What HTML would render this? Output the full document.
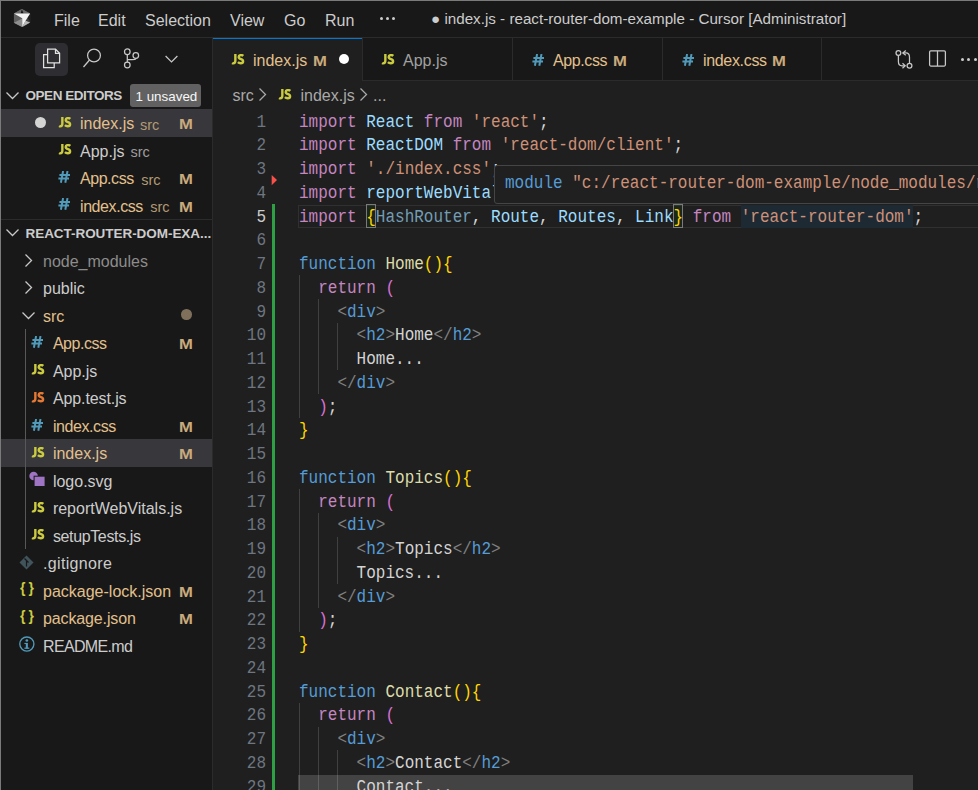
<!DOCTYPE html><html><head><meta charset="utf-8"><style>
*{box-sizing:border-box}
html,body{margin:0;padding:0}
body{width:978px;height:790px;overflow:hidden;background:#1f1f1f;position:relative;font-family:"Liberation Sans",sans-serif;color:#cccccc}
.a{position:absolute}
.t{position:absolute;white-space:nowrap;font-family:"Liberation Sans",sans-serif}
.menu{top:10px;font-size:16px;line-height:20px;color:#cccccc}
.st{font-size:16px;line-height:20px;color:#cccccc}
.desc{font-size:14.5px;line-height:20px}
.jsi{font-weight:700;color:#cbcb41;font-size:13px;line-height:14px;transform:scaleX(0.84);transform-origin:0 0}
.hash{font-weight:700;color:#519aba;font-size:15.5px;line-height:16px}
.mod{color:#e2c08d}
.gi{color:#8c8c8c}
.lnum{position:absolute;left:199px;width:67px;transform:scaleY(1.09);transform-origin:0 0;text-align:right;font-family:"Liberation Mono",monospace;font-size:16px;line-height:20px;color:#6e7681;white-space:pre}
.code{position:absolute;left:299px;transform:scaleY(1.09);transform-origin:0 0;font-family:"Liberation Mono",monospace;font-size:16px;line-height:20px;white-space:pre;color:#d4d4d4}
.hr{color:#739db4}.k{color:#c586c0}.b{color:#569cd6}.v{color:#9cdcfe}.s{color:#ce9178}.f{color:#dcdcaa}.p{color:#808080}.w{color:#d4d4d4}
.y{color:#ffd700}.m{color:#da70d6}.c{color:#179fff}
</style></head><body>
<div class="a" style="left:0px;top:0px;width:978px;height:790px;background:#1f1f1f;"></div>
<div class="a" style="left:1px;top:1px;width:977px;height:36px;background:#181818;"></div>
<div class="a" style="left:1px;top:37px;width:977px;height:1px;background:#2b2b2b;"></div>
<div class="a" style="left:0px;top:0px;width:978px;height:1px;background:#7a7a7a;"></div>
<div class="a" style="left:0px;top:0px;width:1px;height:790px;background:#7a7a7a;"></div>
<svg class="a" style="left:0px;top:0px" width="40" height="34" viewBox="0 0 40 34">
  <polygon points="21.85,8.95 30.1,13.4 30.1,22.6 22.2,27.05 13.95,22.8 13.95,13.4" fill="#5e5e5e"/>
  <polygon points="21.85,8.95 30.1,13.4 13.95,13.4" fill="#6a6a6a"/>
  <polygon points="21.85,9.5 20.6,13.4 23.6,13.4" fill="#151515"/>
  <polygon points="13.95,13.4 22.2,18.2 22.2,27.05 13.95,22.8" fill="#5f5f5f"/>
  <polygon points="13.95,22.8 22.2,18.6 22.2,27.05" fill="#8f8f8f"/>
  <polygon points="22.2,18.2 30.1,13.4 30.1,22.6 22.2,27.05" fill="#3a3a3a"/>
  <polygon points="22.2,27.05 30.1,22.6 25.6,20.8" fill="#b8b8b8"/>
  <polygon points="27.3,17.5 30.1,14.5 30.1,21.5" fill="#1e1e1e"/>
  <polygon points="13.95,13.4 30.1,13.4 25.6,20.8 22.2,27.05 22.2,18.2" fill="#f2f2f2"/>
</svg>
<div class="t menu" style="left:54px;top:11px;">File</div>
<div class="t menu" style="left:98px;top:11px;">Edit</div>
<div class="t menu" style="left:145px;top:11px;">Selection</div>
<div class="t menu" style="left:230px;top:11px;">View</div>
<div class="t menu" style="left:284px;top:11px;">Go</div>
<div class="t menu" style="left:325px;top:11px;">Run</div>
<div class="a" style="left:379.7px;top:16.5px;width:3px;height:3px;background:#cccccc;border-radius:50%"></div>
<div class="a" style="left:385.95px;top:16.5px;width:3px;height:3px;background:#cccccc;border-radius:50%"></div>
<div class="a" style="left:392.2px;top:16.5px;width:3px;height:3px;background:#cccccc;border-radius:50%"></div>
<div class="t menu" style="left:431px;top:8.7px;font-size:15.2px">● index.js - react-router-dom-example - Cursor [Administrator]</div>
<div class="a" style="left:1px;top:38px;width:211px;height:752px;background:#181818;"></div>
<div class="a" style="left:212px;top:38px;width:1px;height:752px;background:#2b2b2b;"></div>
<div class="a" style="left:35px;top:43px;width:33px;height:33px;background:#2e2e32;border-radius:5px"></div>
<svg class="a" style="left:40px;top:46px" width="24" height="26" viewBox="0 0 24 26" fill="none" stroke="#e0e0e0" stroke-width="1.25">
<path d="M7.6 8.6 H3.6 V21.5 H14.2 V16.9"/>
<path d="M7.6 3.2 H15.5 L19.6 7.3 V16.9 H7.6 Z"/>
<path d="M15.5 3.2 V7.3 H19.6"/>
</svg>
<svg class="a" style="left:80px;top:46px" width="24" height="24" viewBox="0 0 24 24" fill="none" stroke="#c8c8c8" stroke-width="1.25">
<circle cx="14" cy="9.5" r="6.4"/><path d="M9.5 14 L3.5 21"/>
</svg>
<svg class="a" style="left:118px;top:44px" width="24" height="26" viewBox="0 0 24 26" fill="none" stroke="#c8c8c8" stroke-width="1.25">
<circle cx="9.3" cy="7.7" r="2.8"/><circle cx="9.3" cy="21" r="2.8"/><circle cx="17.8" cy="11.5" r="2.8"/>
<path d="M9.3 10.5 V18.2"/><path d="M17.8 14.3 C17.8 16 16.5 15.6 9.3 15.6"/>
</svg>
<svg class="a" style="left:163px;top:52px" width="18" height="14" viewBox="0 0 18 14" fill="none" stroke="#c8c8c8" stroke-width="1.25">
<path d="M2.6 4 L8.5 9.9 L14.4 4"/>
</svg>
<svg class="a" style="left:5px;top:89.7px" width="16" height="12" viewBox="0 0 16 12" fill="none" stroke="#c8c8c8" stroke-width="1.3"><path d="M1.5 2.5 L7.5 8.5 L13.5 2.5"/></svg>
<div class="t st" style="left:25.5px;top:86px;font-weight:700;font-size:13.5px;letter-spacing:-0.45px;color:#cccccc">OPEN EDITORS</div>
<div class="a" style="left:130px;top:84px;width:70.5px;height:23px;background:#616161;border-radius:3px"></div>
<div class="t st" style="left:135.5px;top:86.5px;font-size:13.4px;color:#f8f8f8">1 unsaved</div>
<div class="a" style="left:1px;top:109px;width:211px;height:27.5px;background:#37373c;"></div>
<div class="a" style="left:34.5px;top:117.3px;width:11px;height:11px;background:#d4d4d4;border-radius:50%"></div>
<svg class="a" style="left:57.8px;top:116.5px" width="14" height="11" viewBox="0 0 14 11" fill="none" stroke="#cbcb41" stroke-width="2.4"><path d="M4.35 0 V6.8 C4.35 8.6 3.6 9.3 2.2 9.3 C1.8 9.3 1.4 9.2 1.1 9.0"/><path d="M12.3 1.9 C11.7 1.4 10.9 1.1 10 1.1 C8.6 1.1 7.7 1.9 7.7 3 C7.7 4.3 8.7 4.7 10 5.1 C11.4 5.5 12.1 6.2 12.1 7.3 C12.1 8.5 11.1 9.3 9.7 9.3 C8.6 9.3 7.6 8.9 6.9 8.2"/></svg>
<div class="t st" style="left:80px;top:114.0px;color:#e2c08d;letter-spacing:0px">index.js</div>
<div class="t st desc" style="left:139.9px;top:114.6px;color:#b39a74">src</div>
<div class="t st" style="left:178.7px;top:114.0px;color:#c8aa7c;font-size:14.6px;font-weight:700;transform:scaleX(1.14);transform-origin:0 0">M</div>
<svg class="a" style="left:57.8px;top:144.0px" width="14" height="11" viewBox="0 0 14 11" fill="none" stroke="#cbcb41" stroke-width="2.4"><path d="M4.35 0 V6.8 C4.35 8.6 3.6 9.3 2.2 9.3 C1.8 9.3 1.4 9.2 1.1 9.0"/><path d="M12.3 1.9 C11.7 1.4 10.9 1.1 10 1.1 C8.6 1.1 7.7 1.9 7.7 3 C7.7 4.3 8.7 4.7 10 5.1 C11.4 5.5 12.1 6.2 12.1 7.3 C12.1 8.5 11.1 9.3 9.7 9.3 C8.6 9.3 7.6 8.9 6.9 8.2"/></svg>
<div class="t st" style="left:80px;top:141.5px;color:#cccccc;letter-spacing:0px">App.js</div>
<div class="t st desc" style="left:130.5px;top:142.1px;color:#9d9d9d">src</div>
<svg class="a" style="left:58.4px;top:170.8px" width="13" height="12" viewBox="0 0 13 12" fill="none" stroke="#519aba" stroke-width="2"><path d="M5.1 0 L2.9 11.8 M9.5 0 L7.3 11.8 M1.4 4 H12 M0.4 7.6 H11"/></svg>
<div class="t st" style="left:80px;top:169.0px;color:#e2c08d;letter-spacing:-0.45px">App.css</div>
<div class="t st desc" style="left:141.2px;top:169.6px;color:#b39a74">src</div>
<div class="t st" style="left:178.7px;top:169.0px;color:#c8aa7c;font-size:14.6px;font-weight:700;transform:scaleX(1.14);transform-origin:0 0">M</div>
<svg class="a" style="left:58.4px;top:198.3px" width="13" height="12" viewBox="0 0 13 12" fill="none" stroke="#519aba" stroke-width="2"><path d="M5.1 0 L2.9 11.8 M9.5 0 L7.3 11.8 M1.4 4 H12 M0.4 7.6 H11"/></svg>
<div class="t st" style="left:80px;top:196.5px;color:#e2c08d;letter-spacing:-0.42px">index.css</div>
<div class="t st desc" style="left:150.2px;top:197.1px;color:#b39a74">src</div>
<div class="t st" style="left:178.7px;top:196.5px;color:#c8aa7c;font-size:14.6px;font-weight:700;transform:scaleX(1.14);transform-origin:0 0">M</div>
<div class="a" style="left:1px;top:219px;width:211px;height:1px;background:#2b2b2b;"></div>
<svg class="a" style="left:5px;top:227px" width="16" height="12" viewBox="0 0 16 12" fill="none" stroke="#c8c8c8" stroke-width="1.3"><path d="M1.5 2.5 L7.5 8.5 L13.5 2.5"/></svg>
<div class="t st" style="left:25.5px;top:223.5px;font-weight:700;font-size:13.5px;letter-spacing:-0.05px;color:#cccccc">REACT-ROUTER-DOM-EXA...</div>
<div class="a" style="left:1px;top:439.0px;width:211px;height:27.5px;background:#37373c;"></div>
<div class="a" style="left:25px;top:329.0px;width:1px;height:220.0px;background:#585858;"></div>
<svg class="a" style="left:22.5px;top:252.5px" width="12" height="16" viewBox="0 0 12 16" fill="none" stroke="#c8c8c8" stroke-width="1.3"><path d="M2.5 1.5 L8.5 7.5 L2.5 13.5"/></svg>
<div class="t st" style="left:43px;top:251.5px;color:#8c8c8c;letter-spacing:0px">node_modules</div>
<svg class="a" style="left:22.5px;top:280.0px" width="12" height="16" viewBox="0 0 12 16" fill="none" stroke="#c8c8c8" stroke-width="1.3"><path d="M2.5 1.5 L8.5 7.5 L2.5 13.5"/></svg>
<div class="t st" style="left:43px;top:279.0px;color:#cccccc;letter-spacing:0px">public</div>
<svg class="a" style="left:21px;top:309.5px" width="16" height="12" viewBox="0 0 16 12" fill="none" stroke="#c8c8c8" stroke-width="1.3"><path d="M1.5 2.5 L7.5 8.5 L13.5 2.5"/></svg>
<div class="t st" style="left:43px;top:306.5px;color:#e2c08d;letter-spacing:0px">src</div>
<div class="a" style="left:181px;top:309.1px;width:10.5px;height:10.5px;background:#7f705b;border-radius:50%"></div>
<svg class="a" style="left:31px;top:336.0px" width="13" height="12" viewBox="0 0 13 12" fill="none" stroke="#519aba" stroke-width="2"><path d="M5.1 0 L2.9 11.8 M9.5 0 L7.3 11.8 M1.4 4 H12 M0.4 7.6 H11"/></svg>
<div class="t st" style="left:52.9px;top:334.0px;color:#e2c08d;letter-spacing:-0.45px">App.css</div>
<div class="t st" style="left:178.7px;top:334.0px;color:#c8aa7c;font-size:14.6px;font-weight:700;transform:scaleX(1.14);transform-origin:0 0">M</div>
<svg class="a" style="left:31px;top:364.0px" width="14" height="11" viewBox="0 0 14 11" fill="none" stroke="#cbcb41" stroke-width="2.4"><path d="M4.35 0 V6.8 C4.35 8.6 3.6 9.3 2.2 9.3 C1.8 9.3 1.4 9.2 1.1 9.0"/><path d="M12.3 1.9 C11.7 1.4 10.9 1.1 10 1.1 C8.6 1.1 7.7 1.9 7.7 3 C7.7 4.3 8.7 4.7 10 5.1 C11.4 5.5 12.1 6.2 12.1 7.3 C12.1 8.5 11.1 9.3 9.7 9.3 C8.6 9.3 7.6 8.9 6.9 8.2"/></svg>
<div class="t st" style="left:52.9px;top:361.5px;color:#cccccc;letter-spacing:0px">App.js</div>
<svg class="a" style="left:31px;top:391.5px" width="14" height="11" viewBox="0 0 14 11" fill="none" stroke="#e37933" stroke-width="2.4"><path d="M4.35 0 V6.8 C4.35 8.6 3.6 9.3 2.2 9.3 C1.8 9.3 1.4 9.2 1.1 9.0"/><path d="M12.3 1.9 C11.7 1.4 10.9 1.1 10 1.1 C8.6 1.1 7.7 1.9 7.7 3 C7.7 4.3 8.7 4.7 10 5.1 C11.4 5.5 12.1 6.2 12.1 7.3 C12.1 8.5 11.1 9.3 9.7 9.3 C8.6 9.3 7.6 8.9 6.9 8.2"/></svg>
<div class="t st" style="left:52.9px;top:389.0px;color:#cccccc;letter-spacing:-0.1px">App.test.js</div>
<svg class="a" style="left:31px;top:418.5px" width="13" height="12" viewBox="0 0 13 12" fill="none" stroke="#519aba" stroke-width="2"><path d="M5.1 0 L2.9 11.8 M9.5 0 L7.3 11.8 M1.4 4 H12 M0.4 7.6 H11"/></svg>
<div class="t st" style="left:52.9px;top:416.5px;color:#e2c08d;letter-spacing:-0.42px">index.css</div>
<div class="t st" style="left:178.7px;top:416.5px;color:#c8aa7c;font-size:14.6px;font-weight:700;transform:scaleX(1.14);transform-origin:0 0">M</div>
<svg class="a" style="left:31px;top:446.5px" width="14" height="11" viewBox="0 0 14 11" fill="none" stroke="#cbcb41" stroke-width="2.4"><path d="M4.35 0 V6.8 C4.35 8.6 3.6 9.3 2.2 9.3 C1.8 9.3 1.4 9.2 1.1 9.0"/><path d="M12.3 1.9 C11.7 1.4 10.9 1.1 10 1.1 C8.6 1.1 7.7 1.9 7.7 3 C7.7 4.3 8.7 4.7 10 5.1 C11.4 5.5 12.1 6.2 12.1 7.3 C12.1 8.5 11.1 9.3 9.7 9.3 C8.6 9.3 7.6 8.9 6.9 8.2"/></svg>
<div class="t st" style="left:52.9px;top:444.0px;color:#e2c08d;letter-spacing:0px">index.js</div>
<div class="t st" style="left:178.7px;top:444.0px;color:#c8aa7c;font-size:14.6px;font-weight:700;transform:scaleX(1.14);transform-origin:0 0">M</div>
<svg class="a" style="left:28px;top:470.5px" width="18" height="18" viewBox="0 0 18 18">
<circle cx="5.6" cy="5" r="4.3" fill="#a074c4"/><rect x="5.6" y="4.7" width="11" height="10.3" fill="#181818"/><rect x="6.6" y="5.7" width="10" height="9.3" fill="#a074c4"/></svg>
<div class="t st" style="left:52.9px;top:471.5px;color:#cccccc;letter-spacing:0px">logo.svg</div>
<svg class="a" style="left:31px;top:501.5px" width="14" height="11" viewBox="0 0 14 11" fill="none" stroke="#cbcb41" stroke-width="2.4"><path d="M4.35 0 V6.8 C4.35 8.6 3.6 9.3 2.2 9.3 C1.8 9.3 1.4 9.2 1.1 9.0"/><path d="M12.3 1.9 C11.7 1.4 10.9 1.1 10 1.1 C8.6 1.1 7.7 1.9 7.7 3 C7.7 4.3 8.7 4.7 10 5.1 C11.4 5.5 12.1 6.2 12.1 7.3 C12.1 8.5 11.1 9.3 9.7 9.3 C8.6 9.3 7.6 8.9 6.9 8.2"/></svg>
<div class="t st" style="left:52.9px;top:499.0px;color:#cccccc;letter-spacing:0px">reportWebVitals.js</div>
<svg class="a" style="left:31px;top:529.0px" width="14" height="11" viewBox="0 0 14 11" fill="none" stroke="#cbcb41" stroke-width="2.4"><path d="M4.35 0 V6.8 C4.35 8.6 3.6 9.3 2.2 9.3 C1.8 9.3 1.4 9.2 1.1 9.0"/><path d="M12.3 1.9 C11.7 1.4 10.9 1.1 10 1.1 C8.6 1.1 7.7 1.9 7.7 3 C7.7 4.3 8.7 4.7 10 5.1 C11.4 5.5 12.1 6.2 12.1 7.3 C12.1 8.5 11.1 9.3 9.7 9.3 C8.6 9.3 7.6 8.9 6.9 8.2"/></svg>
<div class="t st" style="left:52.9px;top:526.5px;color:#cccccc;letter-spacing:-0.36px">setupTests.js</div>
<svg class="a" style="left:19.3px;top:554.5px" width="16" height="16" viewBox="0 0 16 16">
<path d="M7.5 0.5 L14.5 7.5 L7.5 14.5 L0.5 7.5 Z" fill="#41535b"/><path d="M5.5 3.5 L9.5 7.5 M7.5 5.5 V11.5" stroke="#181818" stroke-width="1.2"/></svg>
<div class="t st" style="left:43px;top:554.0px;color:#cccccc;letter-spacing:0.33px">.gitignore</div>
<div class="t st" style="left:20px;top:578.0px;font-weight:700;color:#cbcb41;font-size:14px;letter-spacing:-0.4px">{ }</div>
<div class="t st" style="left:43px;top:581.5px;color:#e2c08d;letter-spacing:0px">package-lock.json</div>
<div class="t st" style="left:178.7px;top:581.5px;color:#c8aa7c;font-size:14.6px;font-weight:700;transform:scaleX(1.14);transform-origin:0 0">M</div>
<div class="t st" style="left:20px;top:605.5px;font-weight:700;color:#cbcb41;font-size:14px;letter-spacing:-0.4px">{ }</div>
<div class="t st" style="left:43px;top:609.0px;color:#e2c08d;letter-spacing:-0.13px">package.json</div>
<div class="t st" style="left:178.7px;top:609.0px;color:#c8aa7c;font-size:14.6px;font-weight:700;transform:scaleX(1.14);transform-origin:0 0">M</div>
<svg class="a" style="left:18px;top:635.5px" width="18" height="18" viewBox="0 0 18 18" fill="#519aba">
<circle cx="8.85" cy="8.0" r="7.05" fill="none" stroke="#519aba" stroke-width="1.35"/><circle cx="8.85" cy="4.5" r="1.35"/><rect x="7.8" y="6.9" width="2.1" height="5.6"/><rect x="6.4" y="6.9" width="1.6" height="1.1"/><rect x="6.4" y="11.6" width="4.9" height="1.2"/></svg>
<div class="t st" style="left:43px;top:636.5px;color:#cccccc;letter-spacing:-0.65px">README.md</div>
<div class="a" style="left:213px;top:38px;width:765px;height:42px;background:#181818;"></div>
<div class="a" style="left:213px;top:80px;width:765px;height:1px;background:#2b2b2b;"></div>
<div class="a" style="left:213px;top:38px;width:149px;height:43px;background:#1f1f1f;"></div>
<div class="a" style="left:213px;top:38px;width:149px;height:1.25px;background:#0078d4;"></div>
<div class="a" style="left:362px;top:38px;width:1px;height:42px;background:#2b2b2b;"></div>
<div class="a" style="left:512px;top:38px;width:1px;height:42px;background:#2b2b2b;"></div>
<div class="a" style="left:662px;top:38px;width:1px;height:42px;background:#2b2b2b;"></div>
<div class="a" style="left:821px;top:38px;width:1px;height:42px;background:#2b2b2b;"></div>
<svg class="a" style="left:230.7px;top:54.3px" width="14" height="11" viewBox="0 0 14 11" fill="none" stroke="#cbcb41" stroke-width="2.4"><path d="M4.35 0 V6.8 C4.35 8.6 3.6 9.3 2.2 9.3 C1.8 9.3 1.4 9.2 1.1 9.0"/><path d="M12.3 1.9 C11.7 1.4 10.9 1.1 10 1.1 C8.6 1.1 7.7 1.9 7.7 3 C7.7 4.3 8.7 4.7 10 5.1 C11.4 5.5 12.1 6.2 12.1 7.3 C12.1 8.5 11.1 9.3 9.7 9.3 C8.6 9.3 7.6 8.9 6.9 8.2"/></svg>
<div class="t st" style="left:253px;top:51px;color:#e2c08d">index.js</div>
<div class="t st" style="left:312.7px;top:50.5px;color:#c8aa7c;font-size:14.6px;font-weight:700;transform:scaleX(1.14);transform-origin:0 0">M</div>
<div class="a" style="left:338.8px;top:53.8px;width:10.7px;height:10.7px;background:#ffffff;border-radius:50%"></div>
<svg class="a" style="left:380.8px;top:54.3px" width="14" height="11" viewBox="0 0 14 11" fill="none" stroke="#cbcb41" stroke-width="2.4"><path d="M4.35 0 V6.8 C4.35 8.6 3.6 9.3 2.2 9.3 C1.8 9.3 1.4 9.2 1.1 9.0"/><path d="M12.3 1.9 C11.7 1.4 10.9 1.1 10 1.1 C8.6 1.1 7.7 1.9 7.7 3 C7.7 4.3 8.7 4.7 10 5.1 C11.4 5.5 12.1 6.2 12.1 7.3 C12.1 8.5 11.1 9.3 9.7 9.3 C8.6 9.3 7.6 8.9 6.9 8.2"/></svg>
<div class="t st" style="left:403px;top:51px;color:#a0a0a0">App.js</div>
<svg class="a" style="left:531.5px;top:53.5px" width="13" height="12" viewBox="0 0 13 12" fill="none" stroke="#519aba" stroke-width="2"><path d="M5.1 0 L2.9 11.8 M9.5 0 L7.3 11.8 M1.4 4 H12 M0.4 7.6 H11"/></svg>
<div class="t st" style="left:553px;top:51px;color:#e2c08d;letter-spacing:-0.4px">App.css</div>
<div class="t st" style="left:612.9px;top:50.5px;color:#c8aa7c;font-size:14.6px;font-weight:700;transform:scaleX(1.14);transform-origin:0 0">M</div>
<svg class="a" style="left:681.8px;top:53.5px" width="13" height="12" viewBox="0 0 13 12" fill="none" stroke="#519aba" stroke-width="2"><path d="M5.1 0 L2.9 11.8 M9.5 0 L7.3 11.8 M1.4 4 H12 M0.4 7.6 H11"/></svg>
<div class="t st" style="left:703px;top:51px;color:#e2c08d;letter-spacing:-0.33px">index.css</div>
<div class="t st" style="left:772.4px;top:50.5px;color:#c8aa7c;font-size:14.6px;font-weight:700;transform:scaleX(1.14);transform-origin:0 0">M</div>
<svg class="a" style="left:890px;top:44px" width="24" height="28" viewBox="0 0 24 28" fill="none" stroke="#c8c8c8" stroke-width="1.25">
<circle cx="8.4" cy="8.9" r="2.4"/><circle cx="19.5" cy="21.8" r="2.4"/>
<path d="M8.4 11.3 V17.5 C8.4 20.3 9.8 21.8 12 21.8 H15"/><path d="M12.5 19.3 L15.2 21.8 L12.5 24.3"/>
<path d="M19.5 19.4 V13.2 C19.5 10.4 18.1 8.9 15.9 8.9 H13"/><path d="M15.8 6.5 L12.8 8.9 L15.8 11.3"/>
</svg>
<svg class="a" style="left:927px;top:48px" width="22" height="22" viewBox="0 0 22 22" fill="none" stroke="#c8c8c8" stroke-width="1.25">
<rect x="2.6" y="2.8" width="15.8" height="15.2" rx="1.2"/><path d="M10.5 2.8 V18"/>
</svg>
<div class="a" style="left:961.0px;top:57.5px;width:3px;height:3px;background:#cccccc;border-radius:50%"></div>
<div class="a" style="left:967.35px;top:57.5px;width:3px;height:3px;background:#cccccc;border-radius:50%"></div>
<div class="a" style="left:973.7px;top:57.5px;width:3px;height:3px;background:#cccccc;border-radius:50%"></div>
<div class="t st" style="left:232.5px;top:86px;color:#a9a9a9">src</div>
<svg class="a" style="left:257px;top:87px" width="12" height="16" viewBox="0 0 12 16" fill="none" stroke="#a9a9a9" stroke-width="1.3"><path d="M2.5 1.5 L8.5 7.5 L2.5 13.5"/></svg>
<svg class="a" style="left:278px;top:88.8px" width="14" height="11" viewBox="0 0 14 11" fill="none" stroke="#cbcb41" stroke-width="2.4"><path d="M4.35 0 V6.8 C4.35 8.6 3.6 9.3 2.2 9.3 C1.8 9.3 1.4 9.2 1.1 9.0"/><path d="M12.3 1.9 C11.7 1.4 10.9 1.1 10 1.1 C8.6 1.1 7.7 1.9 7.7 3 C7.7 4.3 8.7 4.7 10 5.1 C11.4 5.5 12.1 6.2 12.1 7.3 C12.1 8.5 11.1 9.3 9.7 9.3 C8.6 9.3 7.6 8.9 6.9 8.2"/></svg>
<div class="t st" style="left:300.5px;top:86px;color:#a9a9a9">index.js</div>
<svg class="a" style="left:358px;top:87px" width="12" height="16" viewBox="0 0 12 16" fill="none" stroke="#a9a9a9" stroke-width="1.3"><path d="M2.5 1.5 L8.5 7.5 L2.5 13.5"/></svg>
<div class="t st" style="left:373px;top:86px;color:#a9a9a9">...</div>
<div class="a" style="left:298.4px;top:204.5px;width:700px;height:23.25px;background:transparent;border:1px solid #303030;border-right:none"></div>
<div class="a" style="left:740.5999999999999px;top:205.0px;width:172.79999999999998px;height:22.75px;background:#1d2a34;"></div>
<div class="a" style="left:366.2px;top:204.0px;width:10.1px;height:23.75px;background:rgba(0,100,0,0.12);border:1px solid #7a7a7a"></div>
<div class="a" style="left:673.4px;top:204.0px;width:10.1px;height:23.75px;background:rgba(0,100,0,0.12);border:1px solid #7a7a7a"></div>
<div class="a" style="left:299.0px;top:275.25px;width:1px;height:142.5px;background:#404040;"></div>
<div class="a" style="left:318.2px;top:299.0px;width:1px;height:95.0px;background:#404040;"></div>
<div class="a" style="left:337.4px;top:322.75px;width:1px;height:47.5px;background:#404040;"></div>
<div class="a" style="left:299.0px;top:489.0px;width:1px;height:142.5px;background:#404040;"></div>
<div class="a" style="left:318.2px;top:512.75px;width:1px;height:95.0px;background:#404040;"></div>
<div class="a" style="left:337.4px;top:536.5px;width:1px;height:47.5px;background:#404040;"></div>
<div class="a" style="left:299.0px;top:702.75px;width:1px;height:95.0px;background:#404040;"></div>
<div class="a" style="left:318.2px;top:726.5px;width:1px;height:71.25px;background:#404040;"></div>
<div class="a" style="left:337.4px;top:750.25px;width:1px;height:47.5px;background:#404040;"></div>
<div class="a" style="left:298px;top:775px;width:615px;height:15px;background:rgba(255,255,255,0.165);"></div>
<div class="a" style="left:272px;top:204.0px;width:3px;height:586.0px;background:#2ea043;"></div>
<div class="lnum" style="top:111.6px;color:#6e7681">1</div>
<div class="code" style="top:111.6px"><span class="k">import</span><span class="w"> </span><span class="v">React</span><span class="w"> </span><span class="k">from</span><span class="w"> </span><span class="s">&#x27;react&#x27;</span><span class="w">;</span></div>
<div class="lnum" style="top:135.35px;color:#6e7681">2</div>
<div class="code" style="top:135.35px"><span class="k">import</span><span class="w"> </span><span class="v">ReactDOM</span><span class="w"> </span><span class="k">from</span><span class="w"> </span><span class="s">&#x27;react-dom/client&#x27;</span><span class="w">;</span></div>
<div class="lnum" style="top:159.1px;color:#6e7681">3</div>
<div class="code" style="top:159.1px"><span class="k">import</span><span class="w"> </span><span class="s">&#x27;./index.css&#x27;</span><span class="w">;</span></div>
<div class="lnum" style="top:182.85px;color:#6e7681">4</div>
<div class="code" style="top:182.85px"><span class="k">import</span><span class="w"> </span><span class="v">reportWebVitals</span><span class="w"> </span><span class="k">from</span><span class="w"> </span><span class="s">&#x27;./reportWebVitals&#x27;</span><span class="w">;</span></div>
<div class="lnum" style="top:206.6px;color:#cccccc">5</div>
<div class="code" style="top:206.6px"><span class="k">import</span><span class="w"> </span><span class="y">{</span><span class="hr">HashRouter</span><span class="w">, </span><span class="v">Route</span><span class="w">, </span><span class="v">Routes</span><span class="w">, </span><span class="v">Link</span><span class="y">}</span><span class="w"> </span><span class="k">from</span><span class="w"> </span><span class="s">&#x27;react-router-dom&#x27;</span><span class="w">;</span></div>
<div class="lnum" style="top:230.35px;color:#6e7681">6</div>
<div class="lnum" style="top:254.1px;color:#6e7681">7</div>
<div class="code" style="top:254.1px"><span class="b">function</span><span class="w"> </span><span class="f">Home</span><span class="y">(){</span></div>
<div class="lnum" style="top:277.85px;color:#6e7681">8</div>
<div class="code" style="top:277.85px"><span class="w">  </span><span class="k">return</span><span class="w"> </span><span class="m">(</span></div>
<div class="lnum" style="top:301.6px;color:#6e7681">9</div>
<div class="code" style="top:301.6px"><span class="w">    </span><span class="p">&lt;</span><span class="b">div</span><span class="p">&gt;</span></div>
<div class="lnum" style="top:325.35px;color:#6e7681">10</div>
<div class="code" style="top:325.35px"><span class="w">      </span><span class="p">&lt;</span><span class="b">h2</span><span class="p">&gt;</span><span class="w">Home</span><span class="p">&lt;/</span><span class="b">h2</span><span class="p">&gt;</span></div>
<div class="lnum" style="top:349.1px;color:#6e7681">11</div>
<div class="code" style="top:349.1px"><span class="w">      Home...</span></div>
<div class="lnum" style="top:372.85px;color:#6e7681">12</div>
<div class="code" style="top:372.85px"><span class="w">    </span><span class="p">&lt;/</span><span class="b">div</span><span class="p">&gt;</span></div>
<div class="lnum" style="top:396.6px;color:#6e7681">13</div>
<div class="code" style="top:396.6px"><span class="w">  </span><span class="m">)</span><span class="w">;</span></div>
<div class="lnum" style="top:420.35px;color:#6e7681">14</div>
<div class="code" style="top:420.35px"><span class="y">}</span></div>
<div class="lnum" style="top:444.1px;color:#6e7681">15</div>
<div class="lnum" style="top:467.85px;color:#6e7681">16</div>
<div class="code" style="top:467.85px"><span class="b">function</span><span class="w"> </span><span class="f">Topics</span><span class="y">(){</span></div>
<div class="lnum" style="top:491.6px;color:#6e7681">17</div>
<div class="code" style="top:491.6px"><span class="w">  </span><span class="k">return</span><span class="w"> </span><span class="m">(</span></div>
<div class="lnum" style="top:515.35px;color:#6e7681">18</div>
<div class="code" style="top:515.35px"><span class="w">    </span><span class="p">&lt;</span><span class="b">div</span><span class="p">&gt;</span></div>
<div class="lnum" style="top:539.1px;color:#6e7681">19</div>
<div class="code" style="top:539.1px"><span class="w">      </span><span class="p">&lt;</span><span class="b">h2</span><span class="p">&gt;</span><span class="w">Topics</span><span class="p">&lt;/</span><span class="b">h2</span><span class="p">&gt;</span></div>
<div class="lnum" style="top:562.85px;color:#6e7681">20</div>
<div class="code" style="top:562.85px"><span class="w">      Topics...</span></div>
<div class="lnum" style="top:586.6px;color:#6e7681">21</div>
<div class="code" style="top:586.6px"><span class="w">    </span><span class="p">&lt;/</span><span class="b">div</span><span class="p">&gt;</span></div>
<div class="lnum" style="top:610.35px;color:#6e7681">22</div>
<div class="code" style="top:610.35px"><span class="w">  </span><span class="m">)</span><span class="w">;</span></div>
<div class="lnum" style="top:634.1px;color:#6e7681">23</div>
<div class="code" style="top:634.1px"><span class="y">}</span></div>
<div class="lnum" style="top:657.85px;color:#6e7681">24</div>
<div class="lnum" style="top:681.6px;color:#6e7681">25</div>
<div class="code" style="top:681.6px"><span class="b">function</span><span class="w"> </span><span class="f">Contact</span><span class="y">(){</span></div>
<div class="lnum" style="top:705.35px;color:#6e7681">26</div>
<div class="code" style="top:705.35px"><span class="w">  </span><span class="k">return</span><span class="w"> </span><span class="m">(</span></div>
<div class="lnum" style="top:729.1px;color:#6e7681">27</div>
<div class="code" style="top:729.1px"><span class="w">    </span><span class="p">&lt;</span><span class="b">div</span><span class="p">&gt;</span></div>
<div class="lnum" style="top:752.85px;color:#6e7681">28</div>
<div class="code" style="top:752.85px"><span class="w">      </span><span class="p">&lt;</span><span class="b">h2</span><span class="p">&gt;</span><span class="w">Contact</span><span class="p">&lt;/</span><span class="b">h2</span><span class="p">&gt;</span></div>
<div class="lnum" style="top:776.6px;color:#6e7681">29</div>
<div class="code" style="top:776.6px"><span class="w">      Contact...</span></div>
<svg class="a" style="left:271px;top:174px" width="8" height="12" viewBox="0 0 8 12"><path d="M0.7 1 L6 6 L0.7 11.2 Z" fill="#f85149"/></svg>
<div class="a" style="left:494px;top:164.5px;width:500px;height:39px;background:#202020;border:1px solid #454545;border-radius:3px"></div>
<div class="code" style="left:505px;top:172.5px"><span class="b">module</span> <span class="s">"c:/react-router-dom-example/node_modules/react-router-dom"</span></div>
</body></html>
